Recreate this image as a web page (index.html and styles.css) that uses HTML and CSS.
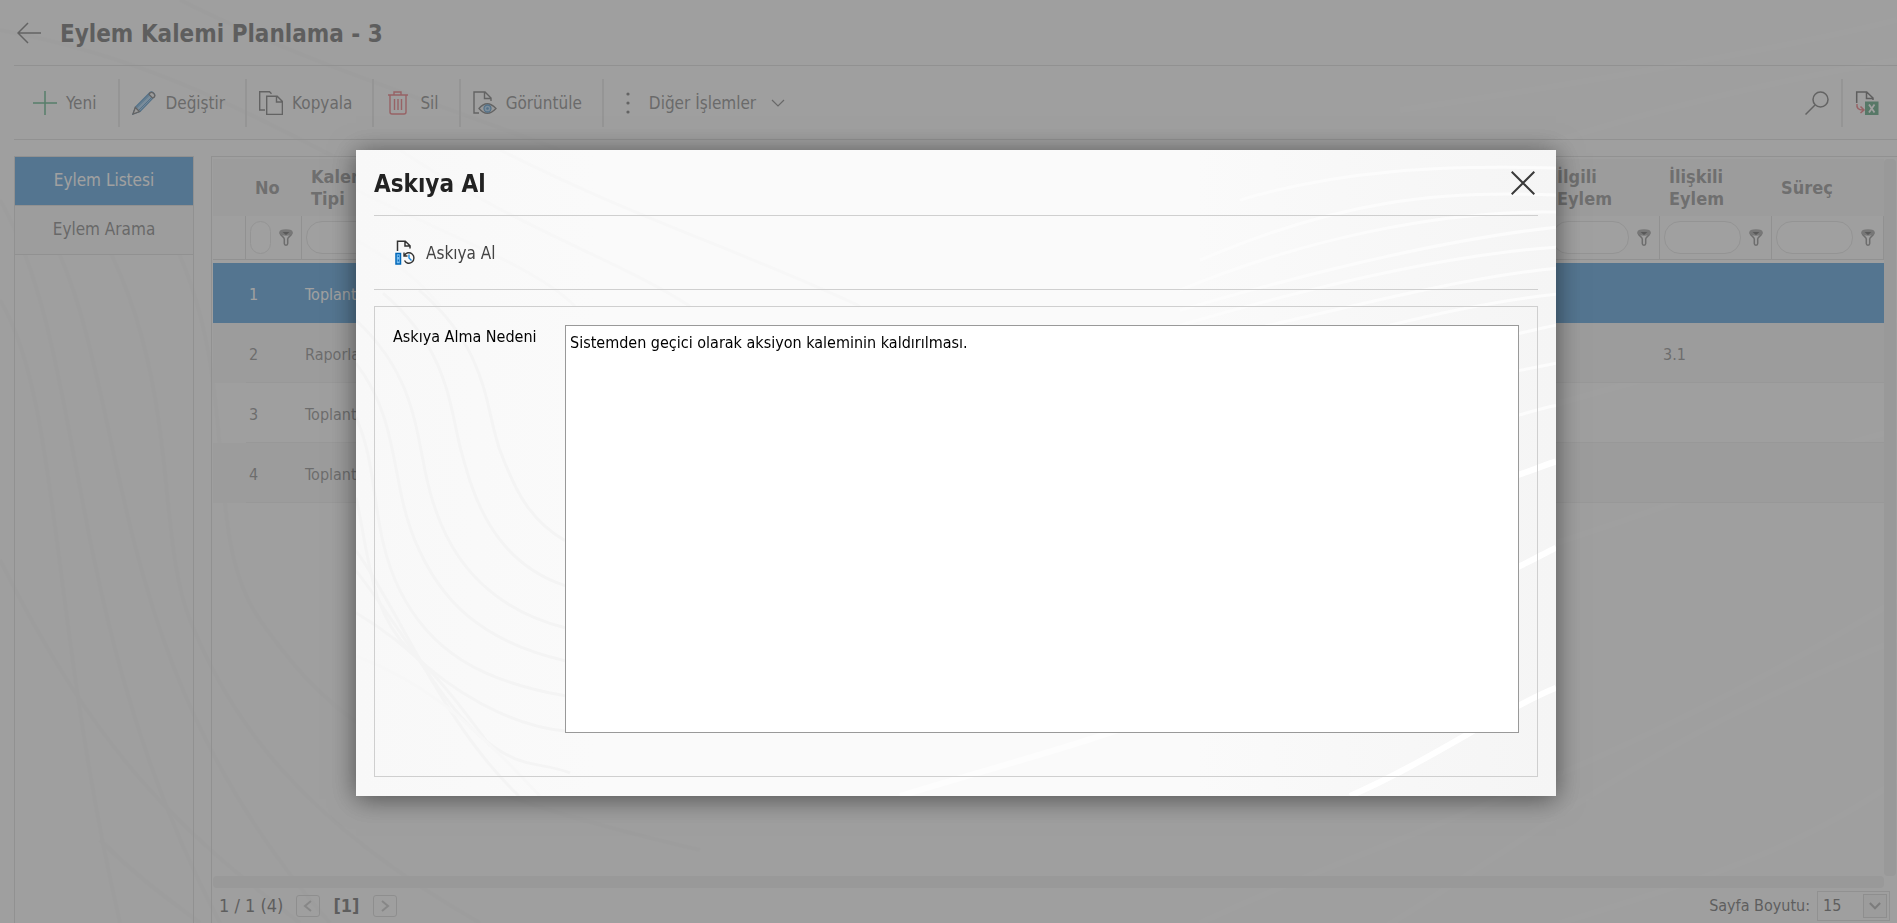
FILE: index.html
```
<!DOCTYPE html>
<html lang="tr">
<head>
<meta charset="utf-8">
<title>Eylem Kalemi Planlama - 3</title>
<link rel="stylesheet" href="styles.css">
</head>
<body>
<svg width="0" height="0" class="defs" aria-hidden="true">
  <symbol id="funnel" viewBox="0 0 14 17">
    <path d="M1 3.500c0 3.500 4.300 4 4.300 6.500v4.500q0 1.700 1.700 1.700t1.700-1.700V10c0-2.500 4.300-3 4.300-6.500" fill="none" stroke="#555" stroke-width="1.500"/>
    <ellipse cx="7" cy="3.500" rx="6" ry="2.500" fill="#777" stroke="#777" stroke-width="1.500"/>
    <path d="M3.500 3h7L7 6z" fill="#111"/>
  </symbol>
</svg>

<div class="page">
  <svg class="page-waves" viewBox="0 0 1897 923" preserveAspectRatio="none" aria-hidden="true">
    <g fill="none" stroke="#f6f6f6" stroke-width="4">
      <path d="M0 300C60 400 50 620 120 923"/>
      <path d="M0 200C90 360 60 620 220 923"/>
      <path d="M30 200C140 360 80 640 330 923"/>
      <path d="M60 170C190 340 150 520 190 620S300 820 480 923"/>
      <path d="M130 170C260 340 190 520 260 620S400 780 700 850"/>
      <path d="M0 560C100 760 180 830 300 923"/>
      <path d="M100 840C140 880 170 900 200 923"/>
      <path d="M0 30C160 60 260 120 380 180"/>
      <path d="M180 0C300 60 400 90 560 150"/>
    </g>
    <g fill="none" stroke="#fefefe" stroke-width="6">
      <path d="M1200 923C1400 830 1600 780 1897 600"/>
      <path d="M1380 930C1560 820 1650 740 1897 640"/>
      <path d="M1560 923C1700 880 1800 850 1897 780"/>
      <path d="M1500 560C1640 520 1780 460 1897 430"/>
      <path d="M1500 420C1640 380 1780 340 1897 320"/>
      <path d="M1500 160C1640 110 1780 80 1897 60"/>
      <path d="M1400 110C1540 90 1780 50 1897 20"/>
    </g>
  </svg>

  <header class="titlebar">
    <button class="icon-button" aria-label="Geri">
      <svg width="24" height="22" viewBox="0 0 24 22"><path d="M24 11H1M11 1L1 11l10 10" fill="none" stroke="#333" stroke-width="1.500"/></svg>
    </button>
    <h1>Eylem Kalemi Planlama - 3</h1>
  </header>

  <div class="toolbar">
    <button class="tool">
      <svg width="24" height="24" viewBox="0 0 24 24"><path d="M12 0v24M0 12h24" stroke="#0a8f4a" stroke-width="1.500"/></svg>
      <span>Yeni</span>
    </button>
    <button class="tool">
      <svg width="24" height="24" viewBox="0 0 24 24"><path d="M1 23l2.500-7L18 1.500q1.500-1.500 3.500.500t.800 3.700L8 20.500z" fill="#7fbdea" stroke="#0063b1" stroke-width="1.300"/><path d="M4.500 17L18 3.500M6.500 19.500L20.500 5.500" stroke="#0063b1"/><path d="M1 23l2.300-6.500 4.200 4zM18 2q1.500-1.500 3.500.300t.900 3.600L20.500 7 17 3.500z" fill="#eee" stroke="#333" stroke-width="1.300"/></svg>
      <span>Değiştir</span>
    </button>
    <button class="tool">
      <svg width="24" height="24" viewBox="0 0 24 24"><path d="M6 19H.700V.700h9.800l2 2M7.700 5.200h10.500l5.200 5.200v13H7.700zM17.500 5.200V11h6" fill="none" stroke="#333" stroke-width="1.400"/></svg>
      <span>Kopyala</span>
    </button>
    <button class="tool tool-wide">
      <svg width="20" height="24" viewBox="0 0 20 24"><path d="M0 4h20M6 4V1h7v3M2 4v17q0 2 2 2h12q2 0 2-2V4M6.500 8v11M10 8v11M13.500 8v11" fill="none" stroke="#e0303a" stroke-width="1.400"/></svg>
      <span>Sil</span>
    </button>
    <button class="tool">
      <svg width="24" height="24" viewBox="0 0 24 24"><path d="M6 22H1V1h11l6 6v3M11.500 1v6.500H18" fill="none" stroke="#333" stroke-width="1.400"/><path d="M6 17.500q8-9.500 17 0-9 9.500-17 0z" fill="#e8e8e8" stroke="#333" stroke-width="1.300"/><circle cx="14.500" cy="17.500" r="3.500" fill="#8cc4ee" stroke="#0063b1" stroke-width="1.300"/><circle cx="14.500" cy="17.500" r="1.300" fill="#0063b1"/></svg>
      <span>Görüntüle</span>
    </button>
    <button class="tool tool-more">
      <svg width="4" height="24" viewBox="0 0 4 24" fill="#333"><circle cx="2" cy="3" r="1.600"/><circle cx="2" cy="12" r="1.600"/><circle cx="2" cy="21" r="1.600"/></svg>
      <span>Diğer İşlemler</span>
      <svg width="14" height="8" viewBox="0 0 14 8"><path d="M1 1l6 6 6-6" fill="none" stroke="#444" stroke-width="1.200"/></svg>
    </button>
    <div class="toolbar-end">
      <button class="tool" aria-label="Ara">
        <svg width="24" height="24" viewBox="0 0 24 24"><circle cx="15.500" cy="8.500" r="7.500" fill="none" stroke="#333" stroke-width="1.500"/><path d="M10 14L.500 23.500" stroke="#333" stroke-width="1.500"/></svg>
      </button>
      <button class="tool" aria-label="Excel'e aktar">
        <svg width="24" height="24" viewBox="0 0 24 24"><path d="M1.700 12V1h10l6.300 6v2M11.500 1v6.500H18" fill="none" stroke="#222" stroke-width="1.500"/><path d="M2 13q-1 6 6 6M5.500 15.500L9 19l-3.500 3" fill="none" stroke="#e0303a" stroke-width="1.500"/><rect x="10" y="10.500" width="13.500" height="13.500" fill="#0a7a40"/><path d="M14 13.500l5.500 8M19.500 13.500l-5.500 8" stroke="#fff" stroke-width="1.800"/></svg>
      </button>
    </div>
  </div>

  <main class="content">
    <nav class="sidebar">
      <a class="side-item side-item-active" href="#">Eylem Listesi</a>
      <a class="side-item" href="#">Eylem Arama</a>
    </nav>

    <section class="grid">
      <div class="grid-view">
        <div class="grid-scroll">
          <table>
            <colgroup><col class="col-mark"><col class="col-no"><col class="col-data"><col><col class="col-data"><col class="col-data"><col class="col-data"></colgroup>
            <thead>
              <tr class="head-row"><th></th><th>No</th><th>Kalem Tipi</th><th></th><th>İlgili Eylem</th><th>İlişkili Eylem</th><th>Süreç</th></tr>
              <tr class="filter-row">
                <td></td>
                <td><div class="filter"><input type="text" aria-label="No"><svg width="14" height="17"><use href="#funnel"/></svg></div></td>
                <td><div class="filter"><input type="text" aria-label="Kalem Tipi"><svg width="14" height="17"><use href="#funnel"/></svg></div></td>
                <td></td>
                <td><div class="filter"><input type="text" aria-label="İlgili Eylem"><svg width="14" height="17"><use href="#funnel"/></svg></div></td>
                <td><div class="filter"><input type="text" aria-label="İlişkili Eylem"><svg width="14" height="17"><use href="#funnel"/></svg></div></td>
                <td><div class="filter"><input type="text" aria-label="Süreç"><svg width="14" height="17"><use href="#funnel"/></svg></div></td>
              </tr>
            </thead>
            <tbody>
              <tr class="spacer"><td colspan="7"></td></tr>
              <tr class="selected"><td></td><td>1</td><td>Toplantı</td><td></td><td></td><td></td><td></td></tr>
              <tr class="alt"><td></td><td>2</td><td>Raporlama</td><td></td><td></td><td>3.1</td><td></td></tr>
              <tr><td></td><td>3</td><td>Toplantı</td><td></td><td></td><td></td><td></td></tr>
              <tr class="alt"><td></td><td>4</td><td>Toplantı</td><td></td><td></td><td></td><td></td></tr>
            </tbody>
          </table>
        </div>
        <div class="vbar"></div>
        <div class="hbar"></div>
      </div>
      <footer class="pager">
        <span>1 / 1 (4)</span>
        <button class="page-button" aria-label="Önceki"><svg width="10" height="12" viewBox="0 0 10 12"><path d="M8 1L2 6l6 5" fill="none" stroke="#aaa" stroke-width="2"/></svg></button>
        <strong>[1]</strong>
        <button class="page-button" aria-label="Sonraki"><svg width="10" height="12" viewBox="0 0 10 12"><path d="M2 1l6 5-6 5" fill="none" stroke="#aaa" stroke-width="2"/></svg></button>
        <label class="size-label" for="size">Sayfa Boyutu:</label>
        <span class="size-box">
          <select id="size"><option>15</option></select>
          <span class="size-arrow"><svg width="12" height="8" viewBox="0 0 14 9"><path d="M1 1l6 6 6-6" fill="none" stroke="#888" stroke-width="2.500"/></svg></span>
        </span>
      </footer>
    </section>
  </main>
</div>

<div class="overlay">
  <div class="dialog" role="dialog" aria-labelledby="dialog-title">
    <svg class="dialog-waves" viewBox="356 150 1200 645" preserveAspectRatio="none" aria-hidden="true">
      <g fill="none" stroke="#f4f4f4" stroke-width="3">
        <path d="M383 293C450 350 450 410 461 450S490 560 565 585S760 640 900 650"/>
        <path d="M419 290C490 350 485 410 500 450S530 520 565 540"/>
        <path d="M356 320C410 370 415 420 425 470S460 600 565 627"/>
        <path d="M356 363C400 420 390 480 415 540S480 640 565 660"/>
        <path d="M356 417C380 470 370 530 400 590S480 680 565 695"/>
        <path d="M356 497C370 560 370 610 410 650S510 725 565 730"/>
        <path d="M356 550C400 610 440 720 519 795"/>
        <path d="M356 570C410 640 440 700 480 735S540 760 570 772"/>
        <path d="M356 612C420 650 450 690 490 745"/>
      </g>
      <g fill="none" stroke="#f7f7f7" stroke-width="3">
        <path d="M356 655C420 680 460 710 540 795"/>
        <path d="M356 190C460 240 540 270 575 306"/>
        <path d="M356 240C400 265 420 280 440 306"/>
        <path d="M400 150C520 230 620 260 690 306"/>
        <path d="M500 150C640 220 740 250 860 306"/>
      </g>
      <g fill="none" stroke="#fcfcfc" stroke-width="3">
        <path d="M1240 200C1340 170 1440 165 1556 168"/>
        <path d="M1200 260C1340 200 1440 190 1556 195"/>
        <path d="M1180 290C1300 240 1440 210 1556 212"/>
        <path d="M1180 310C1300 275 1440 240 1556 227"/>
        <path d="M1180 325C1300 290 1440 255 1556 247"/>
        <path d="M1180 345C1300 320 1440 280 1556 268"/>
        <path d="M1390 325C1450 310 1500 300 1556 294"/>
        <path d="M1510 335C1530 331 1540 328 1556 325"/>
        <path d="M1510 372C1530 368 1540 366 1556 363"/>
        <path d="M1510 417C1530 412 1540 408 1556 405"/>
      </g>
      <g fill="none" stroke="#fff" stroke-width="6">
        <path d="M1510 477C1530 471 1540 466 1556 461"/>
        <path d="M1510 570C1530 561 1540 555 1556 547"/>
        <path d="M1350 795C1430 760 1500 710 1556 687"/>
      </g>
      <path d="M900 795C980 770 1060 750 1130 725" fill="none" stroke="#fdfdfd" stroke-width="6"/>
    </svg>
    <div class="dialog-head">
      <h2 id="dialog-title">Askıya Al</h2>
      <button class="icon-button" aria-label="Kapat">
        <svg width="24" height="24" viewBox="0 0 24 24"><path d="M.700.700l22.600 22.600M23.300.700L.700 23.300" stroke="#3a3a3a" stroke-width="2"/></svg>
      </button>
    </div>
    <div class="dialog-tools">
      <button class="dialog-tool">
        <svg width="20" height="25" viewBox="0 0 20 25"><path d="M2.500 11V1.200h7.800L15 5.800v2.700M10 1.200V6h5" fill="none" stroke="#333" stroke-width="1.500"/><rect x="1" y="13.500" width="4.500" height="10.500" fill="#7cc0f2" stroke="#0067b8" stroke-width="1.500"/><path d="M3.300 15.500v1.500M3.300 19.500v2" stroke="#0067b8" stroke-width="1.200"/><path d="M9.500 15.500a5 5.300 0 1 1 0 5M9 12.500v3.500h3.500" fill="none" stroke="#333" stroke-width="1.400"/><path d="M14 14.500v3.500l2.500 2.500" fill="none" stroke="#1a86d8" stroke-width="1.400"/></svg>
        <span>Askıya Al</span>
      </button>
    </div>
    <div class="panel">
      <label for="reason">Askıya Alma Nedeni</label>
      <textarea id="reason" spellcheck="false">Sistemden geçici olarak aksiyon kaleminin kaldırılması.</textarea>
    </div>
  </div>
</div>
</body>
</html>
```

FILE: styles.css
```
* { box-sizing: border-box; }

html, body { height: 100%; }

body {
  margin: 0;
  overflow: hidden;
  background: #fafafa;
  color: #333;
  font: 16px/22px Tahoma, "DejaVu Sans Condensed", "Noto Sans", sans-serif;
}

button, input, select, textarea { font: inherit; color: inherit; }
button { padding: 0; border: 0; background: none; cursor: pointer; }
svg { display: block; flex: none; }
.defs { position: absolute; }

.page {
  position: relative;
  display: flex;
  flex-direction: column;
  height: 100vh;
  padding-left: 14px;
}

.page-waves {
  position: absolute;
  inset: 0;
  z-index: -1;
  width: 100%;
  height: 100%;
}

.titlebar {
  display: flex;
  align-items: center;
  gap: 19px;
  height: 66px;
  padding-left: 3px;
  border-bottom: 1px solid #cbcbcb;
}

h1, h2 { margin: 0; padding-top: 2px; font-size: 24px; line-height: 30px; color: #222; }

.toolbar {
  display: flex;
  align-items: center;
  height: 74px;
  border-bottom: 1px solid #cbcbcb;
  padding-left: 7px;
}

.tool {
  display: flex;
  align-items: center;
  gap: 9px;
  height: 48px;
  padding: 0 20px 0 12px;
  border-right: 2px solid #dadada;
  font-size: 17px;
  color: #4a4a4a;
}
.tool:first-child { padding-right: 22px; }
.tool-wide { gap: 12px; padding-left: 14px; }
.tool-more { gap: 19px; padding-left: 22px; border-right: 0; }
.tool-more svg:last-child { margin-left: -4px; }

.toolbar-end { display: flex; margin-left: auto; padding-right: 6px; }
.toolbar-end .tool { padding: 0 12px; }
.toolbar-end .tool:last-child { border-right: 0; }

.content {
  display: flex;
  flex: 1;
  gap: 17px;
  min-height: 0;
  padding-top: 16px;
}

.sidebar { width: 180px; flex: none; border: 1px solid #cbcbcb; border-bottom: 0; }

.side-item {
  display: block;
  height: 49px;
  border-bottom: 1px solid #cbcbcb;
  background: #f4f4f4;
  color: #444;
  font-size: 17px;
  line-height: 46px;
  text-align: center;
  text-decoration: none;
}
.side-item-active { background: #0070c8; color: #fff; }

.grid {
  display: flex;
  flex: 1;
  flex-direction: column;
  min-width: 0;
  border: solid #cbcbcb;
  border-width: 1px 0 0 1px;
}

.grid-view {
  display: grid;
  flex: 1;
  grid-template: 1fr 12px / 1fr 12px;
  min-height: 0;
  padding: 2px 1px 0;
}
.grid-scroll { overflow: hidden; }
.vbar, .hbar { border-radius: 4px; background: #e6e6e6; }

table { width: 100%; border-collapse: separate; border-spacing: 0; table-layout: fixed; }
.col-mark { width: 33px; }
.col-no { width: 56px; }
.col-data { width: 112px; }

th {
  height: 57px;
  padding: 0 9px;
  background: #f2f2f2;
  color: #5a5a5a;
  font-size: 18px;
  line-height: 22px;
  text-align: left;
}
th:nth-child(n+3) { padding-right: 40px; }

.filter-row td {
  height: 44px;
  padding: 0 8px 0 4px;
  border-right: 1px solid #cbcbcb;
  border-bottom: 1px solid #cbcbcb;
}
.filter { display: flex; align-items: center; gap: 8px; }
.filter input {
  flex: 1;
  min-width: 0;
  width: 0;
  height: 33px;
  padding: 0 8px;
  border: 1px solid #d6d6d6;
  border-radius: 16px;
  background: #fdfdfd;
}

.spacer td { height: 3px; padding: 0; border: 0; }

tbody td {
  height: 60px;
  padding: 5px 3px 0;
  border-bottom: 1px solid #e4e4e4;
  color: #555;
}
tbody td:first-child { border-bottom: 0; }
.alt td { background: #f1f1f1; }
.selected td { background: #0070c8; color: #fff; border-color: #0070c8; }

.pager {
  display: flex;
  align-items: center;
  gap: 13px;
  height: 35px;
  padding: 0 7px;
  font-size: 18px;
  color: #222;
}
.page-button {
  display: grid;
  place-items: center;
  width: 24px;
  height: 22px;
  border: 1px solid #c4c4c4;
  border-radius: 3px;
}
.size-label { margin-left: auto; margin-right: -6px; font-size: 16px; }
.size-box { position: relative; height: 30px; font-size: 16px; }
select {
  width: 73px;
  height: 30px;
  padding: 0 5px;
  border: 1px solid #cbcbcb;
  background: none;
  appearance: none;
}
.size-arrow {
  position: absolute;
  top: 3px;
  right: 3px;
  display: grid;
  place-items: center;
  width: 24px;
  height: 24px;
  border: 1px solid #c4c4c4;
  background: #f2f2f2;
  pointer-events: none;
}

.overlay {
  position: fixed;
  inset: 0;
  display: flex;
  justify-content: center;
  align-items: flex-start;
  padding: 150px 0 0 15px;
  background: rgb(119 119 119 / 70%);
}

.dialog {
  position: relative;
  width: 1200px;
  max-width: 90%;
  padding: 0 18px 19px;
  background: linear-gradient(90deg, #f8f8f8, #fafafa 20%, #fafafa 70%, #f5f5f5);
  box-shadow: 0 3px 25px rgb(0 0 0 / 50%);
}
.dialog-waves { position: absolute; inset: 0; width: 100%; height: 100%; }
.dialog-head, .dialog-tools, .panel { position: relative; }

.dialog-head {
  display: flex;
  align-items: center;
  justify-content: space-between;
  height: 66px;
  padding-right: 3px;
  border-bottom: 1px solid #cfcfcf;
}

.dialog-tools { display: flex; height: 74px; padding-left: 21px; border-bottom: 1px solid #cfcfcf; }
.dialog-tool { display: flex; align-items: center; gap: 11px; font-size: 17px; color: #444; }

.panel {
  display: flex;
  align-items: flex-start;
  margin-top: 16px;
  padding: 18px 18px 43px 18px;
  border: 1px solid #cfcfcf;
  color: #000;
}
.panel label { width: 172px; flex: none; padding-top: 1px; }
textarea {
  flex: 1;
  height: 408px;
  padding: 6px 4px;
  border: 1px solid #999;
  outline: 0;
  resize: none;
  background: #fff;
}
```
